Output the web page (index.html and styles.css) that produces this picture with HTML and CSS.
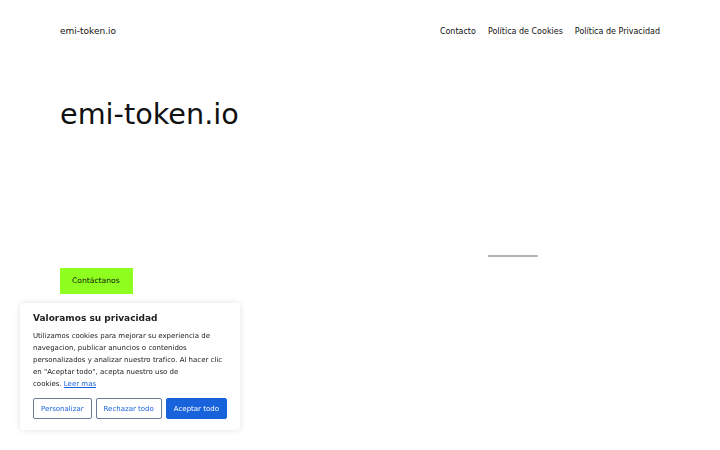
FILE: index.html
```
<!DOCTYPE html>
<html lang="es">

<head>
    <meta charset="UTF-8">
    <meta name="viewport" content="width=device-width, initial-scale=1.0">
    <title>emi-token.io</title>
    <link rel="stylesheet" href="styles.css">
</head>

<body>
    <header class="site-header">
        <a href="#" class="brand">emi-token.io</a>
        <nav class="main-nav">
            <a href="#">Contacto</a>
            <a href="#">Política de Cookies</a>
            <a href="#">Política de Privacidad</a>
        </nav>
    </header>

    <main class="hero">
        <div class="hero-left">
            <h1>emi-token.io</h1>
            <a href="#" class="contact-btn">Contáctanos</a>
        </div>
        <div class="hero-right">
            <hr class="divider">
        </div>
    </main>

    <!-- Cookie consent -->
    <div class="cookie-banner">
        <h3>Valoramos su privacidad</h3>
        <p>Utilizamos cookies para mejorar su experiencia de navegacion, publicar anuncios o contenidos personalizados y analizar nuestro trafico. Al hacer clic en "Aceptar todo", acepta nuestro uso de <span class="nowrap">cookies. <a href="#">Leer mas</a></span></p>
        <div class="cookie-actions">
            <button class="btn-outline">Personalizar</button>
            <button class="btn-outline">Rechazar todo</button>
            <button class="btn-primary">Aceptar todo</button>
        </div>
    </div>
</body>

</html>
```

FILE: styles.css
```
/* Base */
body {
    font-family: "DejaVu Sans", sans-serif;
    background-color: #ffffff;
    color: #111;
    margin: 0;
    padding: 0 60px;
}

a {
    color: inherit;
    text-decoration: none;
}

/* Header */
.site-header {
    height: 60px;
    display: flex;
    justify-content: space-between;
    align-items: center;
    padding-top: 1px;
}

.brand {
    font-size: 9px;
    color: #111;
}

.main-nav {
    display: flex;
    gap: 12px;
}

.main-nav a {
    font-size: 8px;
    color: #111;
}

/* Hero */
.hero {
    display: grid;
    grid-template-columns: 428px 1fr;
}

.hero-left h1 {
    font-size: 28.7px;
    font-weight: normal;
    line-height: 34px;
    margin: 36px 0 137px;
    color: #111;
}

.contact-btn {
    display: inline-block;
    background-color: #8fff1f;
    color: #13200a;
    font-size: 7.6px;
    line-height: 26px;
    padding: 0 13px 0 12px;
}

.hero-right {
    padding-top: 194px;
}

.divider {
    width: 50px;
    margin: 0;
    border: none;
    height: 1.5px;
    background-color: #b4b4b4;
}

/* Cookie Banner */
.cookie-banner {
    position: fixed;
    left: 20px;
    bottom: 20px;
    width: 194px;
    padding: 10px 13px 11px;
    background-color: #fff;
    border-radius: 4px;
    box-shadow: 0 0 6px rgba(0, 0, 0, 0.12);
}

.cookie-banner h3 {
    font-size: 9px;
    font-weight: bold;
    color: #212121;
    margin: 0 0 7px;
}

.cookie-banner p {
    font-size: 7px;
    line-height: 12px;
    color: #212121;
    margin: 0 0 8px;
}

.cookie-banner p a {
    color: #1863dc;
    text-decoration: underline;
}

.nowrap {
    white-space: nowrap;
}

.cookie-actions {
    display: flex;
    gap: 4px;
}

.cookie-actions button {
    font-family: "DejaVu Sans", sans-serif;
    font-size: 7px;
    height: 21px;
    border-radius: 2px;
    cursor: pointer;
    padding: 0 7px;
}

.btn-outline {
    background-color: #fff;
    color: #1863dc;
    border: 1.5px solid #6b7c96;
}

.btn-primary {
    background-color: #1863dc;
    color: #fff;
    border: 1.5px solid #1863dc;
}
```
